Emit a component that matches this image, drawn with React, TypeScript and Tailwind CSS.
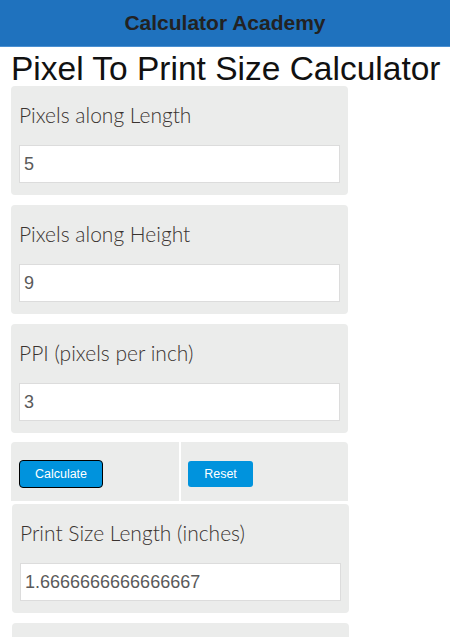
import React from 'react'

const arial = { fontFamily: '"Liberation Sans", Arial, sans-serif' }
const label = { fontFamily: 'Lato, "Open Sans", sans-serif' }

function Field({ title, value }: { title: string; value: string }) {
  return (
    <div className="w-[337px] rounded-[4px] bg-[#ebeceb] px-[8px] pt-[16px] pb-[12px]">
      <div className="text-[21px] font-light leading-[26px] text-[#3a3330]" style={label}>{title}</div>
      <input
        readOnly
        value={value}
        className="mt-[17px] block h-[38px] w-full border border-[#dcdcdc] bg-white px-[4px] text-[18px] text-[#5a5a5a] outline-none"
        style={arial}
      />
    </div>
  )
}

export default function App() {
  return (
    <div className="min-h-screen bg-white">
      {/* Header */}
      <div className="flex h-[47px] items-center justify-center border-b border-[#4a90d2] bg-[#1f72be]">
        <span className="text-[21px] font-bold text-[#222]" style={arial}>Calculator Academy</span>
      </div>

      <h1 className="ml-[11px] mt-[2px] h-[37px] text-[33.5px] leading-[40px] text-[#111]" style={arial}>
        Pixel To Print Size Calculator
      </h1>

      <div className="ml-[11px] flex flex-col">
        <Field title="Pixels along Length" value="5" />
        <div className="h-[10px]" />
        <Field title="Pixels along Height" value="9" />
        <div className="h-[10px]" />
        <Field title="PPI (pixels per inch)" value="3" />
        <div className="h-[9px]" />

        {/* Buttons */}
        <div className="flex w-[337px] gap-[2px]">
          <div className="flex h-[59px] w-[168px] items-center rounded-tl-[4px] bg-[#ebeceb] pl-[8px] pt-[5px]">
            <button
              className="h-[28px] w-[84px] rounded-[4px] border border-black bg-[#0093dd] text-[12.5px] text-white"
              style={arial}
            >
              Calculate
            </button>
          </div>
          <div className="flex h-[59px] flex-1 items-center rounded-tr-[4px] bg-[#ebeceb] pl-[7px] pt-[5px]">
            <button
              className="h-[26px] w-[65px] rounded-[3px] bg-[#0093dd] text-[12.5px] text-white"
              style={arial}
            >
              Reset
            </button>
          </div>
        </div>

        <div className="ml-[1px] mt-[3px]">
          <Field title="Print Size Length (inches)" value="1.6666666666666667" />
        </div>
        <div className="ml-[1px] mt-[10px]">
          <Field title="Print Size Height (inches)" value="3" />
        </div>
      </div>
    </div>
  )
}
